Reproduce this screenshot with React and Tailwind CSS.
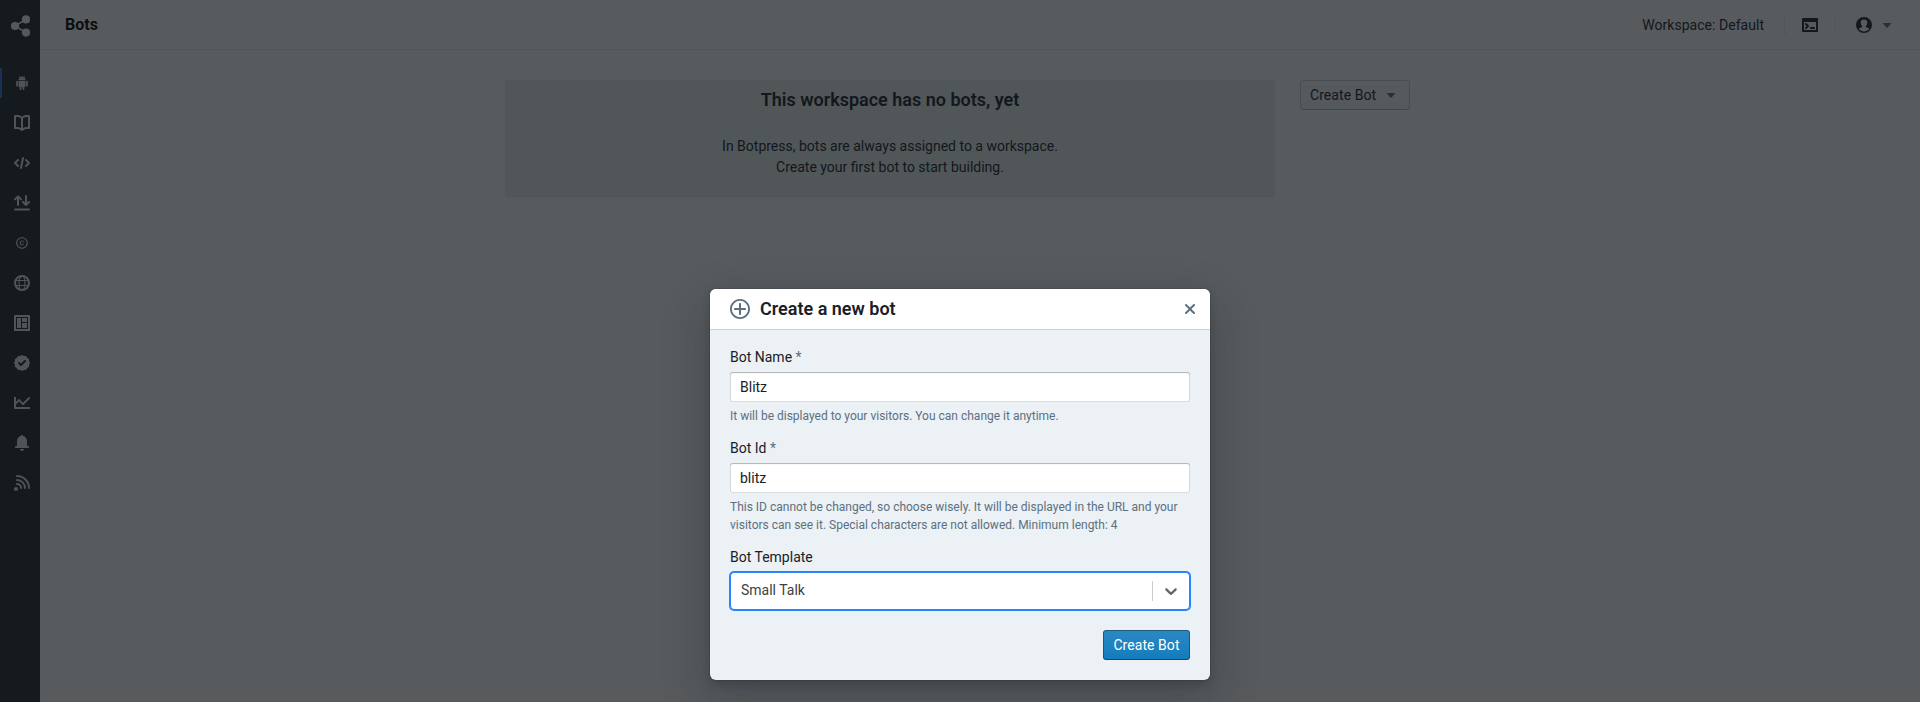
import React from "react";
import { MdCopyright } from "react-icons/md";

function Icon({ size = 16, box = "0 0 16 16", children }) {
  return (
    <svg width={size} height={size} viewBox={box} fill="currentColor" fillRule="evenodd" className="block shrink-0">
      {children}
    </svg>
  );
}

const Share = () => (
  <Icon size={22} box="0 0 22 22">
    <circle cx="5" cy="11" r="4.1" />
    <circle cx="16" cy="4.4" r="4.1" />
    <circle cx="16" cy="17.6" r="4.1" />
    <path d="M16 4.4 5 11l11 6.6" fill="none" stroke="currentColor" strokeWidth="1.6" />
  </Icon>
);

const Android = () => (
  <Icon size={14} box="0 0 24 24">
    <path d="M6 18c0 .55.45 1 1 1h1v3.5c0 .83.67 1.5 1.5 1.5s1.5-.67 1.5-1.5V19h2v3.5c0 .83.67 1.5 1.5 1.5s1.5-.67 1.5-1.5V19h1c.55 0 1-.45 1-1V8H6v10zM3.5 8C2.67 8 2 8.67 2 9.5v7c0 .83.67 1.5 1.5 1.5S5 17.33 5 16.5v-7C5 8.67 4.33 8 3.5 8zm17 0c-.83 0-1.5.67-1.5 1.5v7c0 .83.67 1.5 1.5 1.5s1.5-.67 1.5-1.5v-7c0-.83-.67-1.5-1.5-1.5zm-4.97-5.84l1.3-1.3c.2-.2.2-.51 0-.71-.2-.2-.51-.2-.71 0l-1.48 1.48C13.85 1.23 12.95 1 12 1c-.96 0-1.86.23-2.66.63L7.85.15c-.2-.2-.51-.2-.71 0-.2.2-.2.51 0 .71l1.31 1.31C6.97 3.26 6 5.01 6 7h12c0-1.99-.97-3.75-2.47-4.84zM10 5H9V4h1v1zm5 0h-1V4h1v1z" />
  </Icon>
);

const Manual = () => (
  <Icon>
    <path d="M15.99 1.13c-.02-.41-.33-.77-.78-.87C12.26-.33 9.84.13 8 1.63 6.16.13 3.74-.33.78.26.33.35.03.71.01 1.13H0v12c0 .08 0 .17.02.26.12.51.65.83 1.19.71 2.63-.57 4.59-.04 6.01 1.57.02.03.06.04.08.06.02.02.03.04.05.06.04.03.09.04.13.07.05.03.09.05.14.08.1.04.21.07.32.07h.11c.11 0 .22-.03.32-.07.05-.02.09-.05.14-.08.04-.02.09-.04.13-.07.02-.02.03-.04.05-.06.03-.02.06-.03.08-.06 1.42-1.6 3.39-2.13 6.01-1.57.54.12 1.07-.2 1.19-.71.02-.08.02-.17.02-.26v-12zM7 12.99c-1.4-.83-3.07-1.14-5-.93V1.96c2.11-.28 3.75.2 5 1.46v9.57zm7-.93c-1.93-.21-3.6.1-5 .93V3.42c1.25-1.26 2.89-1.74 5-1.46v10.1z" />
  </Icon>
);

const Code = () => (
  <Icon>
    <path d="M15.71 7.29l-3-3a1.003 1.003 0 00-1.42 1.42L13.59 8l-2.29 2.29c-.19.18-.3.43-.3.71a1.003 1.003 0 001.71.71l3-3c.18-.18.29-.43.29-.71 0-.28-.11-.53-.29-.71zM5 5a1.003 1.003 0 00-1.71-.71l-3 3C.11 7.47 0 7.72 0 8c0 .28.11.53.29.71l3 3a1.003 1.003 0 001.42-1.42L2.41 8 4.7 5.71c.19-.18.3-.43.3-.71zm4-3c-.48 0-.87.35-.96.81l-2 10c-.01.06-.04.12-.04.19 0 .55.45 1 1 1 .48 0 .87-.35.96-.81l2-10c.01-.06.04-.12.04-.19 0-.55-.45-1-1-1z" />
  </Icon>
);

const Sort = () => (
  <Icon>
    <path d="M1 14.5h14M4 10V1.6M1 4.4l3-3 3 3M12 1v8.6M9 7l3 3 3-3" fill="none" stroke="currentColor" strokeWidth="2" strokeLinecap="round" strokeLinejoin="round" />
  </Icon>
);

const Globe = () => (
  <Icon>
    <g fill="none" stroke="currentColor">
      <circle cx="8" cy="8" r="7" strokeWidth="2" />
      <ellipse cx="8" cy="8" rx="3" ry="7" strokeWidth="1.1" />
      <path d="M1.5 5.5h13M1.5 10.5h13" strokeWidth="1" />
    </g>
  </Icon>
);

const Panels = () => (
  <Icon>
    <path d="M.5 0h15a.5.5 0 01.5.5v15a.5.5 0 01-.5.5H.5a.5.5 0 01-.5-.5V.5A.5.5 0 01.5 0zM2 2v12h12V2H2z" />
    <path d="M3 3h4v10H3zM8 3h5v4H8zM8 8h5v5H8z" />
  </Icon>
);

const Endorsed = () => (
  <Icon>
    <path d="M15.86 7.5l-.81-1.42V4.5c0-.36-.19-.68-.49-.87l-1.37-.8-.81-1.41c-.19-.31-.51-.49-.86-.49H9.89L8.5.14a.945.945 0 00-1 0l-1.39.79H4.52c-.36 0-.68.19-.87.49l-.8 1.37-1.44.84c-.3.19-.49.51-.49.87v1.65l-.78 1.34a.945.945 0 000 1l.78 1.34v1.65c0 .36.19.68.49.87l1.42.81.8 1.37c.19.31.51.49.87.49H6.1l1.4.8a.945.945 0 001 0l1.4-.8h1.6c.36 0 .68-.19.87-.49l.81-1.41 1.37-.8c.3-.19.49-.51.49-.87v-1.59l.82-1.42a.945.945 0 000-.94zm-4.12-.81l-4 4c-.18.19-.43.31-.74.31s-.56-.12-.74-.29l-2-2A1.003 1.003 0 015.68 7.3L7 8.6l3.29-3.31a1.003 1.003 0 011.45 1.4z" />
  </Icon>
);

const Chart = () => (
  <Icon>
    <path d="M1 3v10h14" fill="none" stroke="currentColor" strokeWidth="2" strokeLinecap="square" strokeLinejoin="round" />
    <path d="M1.5 8.6L5 5.2l4 4L15.2 3" fill="none" stroke="currentColor" strokeWidth="1.9" strokeLinecap="round" />
  </Icon>
);

const Bell = () => (
  <Icon>
    <path d="M8 16c1.1 0 2-.9 2-2H6c0 1.1.9 2 2 2zm6-5c-.55 0-1-.45-1-1V6c0-2.43-1.73-4.45-4.02-4.9 0-.04.02-.06.02-.1 0-.55-.45-1-1-1S7 .45 7 1c0 .04.02.06.02.1A4.992 4.992 0 003 6v4c0 .55-.45 1-1 1s-1 .45-1 1 .45 1 1 1h12c.55 0 1-.45 1-1s-.45-1-1-1z" />
  </Icon>
);

const Feed = () => (
  <Icon>
    <circle cx="2" cy="14" r="2" />
    <path d="M3 9a4 4 0 014 4M3 5a8 8 0 018 8M3 1a12 12 0 0112 12" fill="none" stroke="currentColor" strokeWidth="1.9" strokeLinecap="round" />
  </Icon>
);

const Console = () => (
  <Icon>
    <path d="M15 15H1c-.55 0-1-.45-1-1V2c0-.55.45-1 1-1h14c.55 0 1 .45 1 1v12c0 .55-.45 1-1 1zM14 5H2v8h12V5zM4 6c.28 0 .53.11.71.29l2 2c.18.18.29.43.29.71s-.11.53-.29.71l-2 2a1.003 1.003 0 01-1.42-1.42L4.590 9l-1.300-1.290A1.003 1.003 0 014 6zm5 4h3c.55 0 1 .45 1 1s-.45 1-1 1H9c-.55 0-1-.45-1-1s.45-1 1-1z" />
  </Icon>
);

const User = () => (
  <Icon>
    <path d="M8 0a8 8 0 100 16A8 8 0 008 0zm0 2.4c2.3 0 3.5 1.5 3.3 3.3-.1 1.2-.6 2.400-1.300 3.200-.2.3-.3 1.050.1 1.300.8.4 2.400.8 3.300 1.500C12.200 13.400 10.200 14.500 8 14.500s-4.200-1.100-5.400-2.800c.9-.7 2.500-1.100 3.300-1.500.4-.25.3-1 .1-1.300-.7-.8-1.200-2-1.300-3.200C4.500 3.900 5.700 2.400 8 2.400z" />
  </Icon>
);

const Caret = () => (
  <Icon>
    <path d="M12 6.500c0-.28-.22-.5-.5-.5h-7a.495.495 0 00-.37.830l3.500 4c.09.1.22.170.37.170s.28-.07.370-.170l3.500-4c.08-.09.13-.2.13-.330z" />
  </Icon>
);

const AddCircle = () => (
  <Icon size={20} box="0 0 20 20">
    <path d="M10 0C4.480 0 0 4.480 0 10s4.480 10 10 10 10-4.480 10-10S15.520 0 10 0zm0 18.200a8.200 8.200 0 110-16.400 8.200 8.200 0 010 16.400zM15 9h-4V5c0-.55-.45-1-1-1s-1 .45-1 1v4H5c-.55 0-1 .45-1 1s.45 1 1 1h4v4c0 .55.45 1 1 1s1-.45 1-1v-4h4c.55 0 1-.45 1-1s-.45-1-1-1z" />
  </Icon>
);

const Cross = () => (
  <Icon>
    <path d="M9.410 8l3.290-3.290c.19-.18.3-.43.3-.71a1.003 1.003 0 00-1.710-.71L8 6.590l-3.290-3.300a1.003 1.003 0 00-1.420 1.420L6.590 8 3.300 11.290c-.19.18-.3.43-.3.710a1.003 1.003 0 001.710.710L8 9.410l3.290 3.290c.18.19.43.3.710.3a1.003 1.003 0 00.710-1.710L9.410 8z" />
  </Icon>
);

const Chevron = () => (
  <Icon size={20} box="0 0 20 20">
    <path d="M4.516 7.548c0.436-0.446 1.043-0.481 1.576 0l3.908 3.747 3.908-3.747c0.533-0.481 1.141-0.446 1.574 0 0.436 0.445 0.408 1.197 0 1.615-0.406 0.418-4.695 4.502-4.695 4.502-0.217 0.223-0.502 0.335-0.787 0.335s-0.570-0.112-0.789-0.335c0 0-4.287-4.084-4.695-4.502s-0.436-1.170 0-1.615z" />
  </Icon>
);

const Copyright = () => <MdCopyright size={14} />;

const navItems = [Android, Manual, Code, Sort, Copyright, Globe, Panels, Endorsed, Chart, Bell, Feed];

function Sidebar() {
  return (
    <nav className="flex w-10 shrink-0 flex-col bg-[#212529]">
      <div className="flex h-[63px] items-start pt-[15px] pl-2.5 text-[#f5f8fa]">
        <Share />
      </div>
      {navItems.map((Glyph, i) => (
        <div key={i} className="flex h-10 items-center">
          <div className={i === 0 ? "h-[30px] w-0.5 bg-[#3273dc]" : "h-[30px] w-0.5"} />
          <div className="flex flex-1 justify-center pl-0.5 text-[#e6e6e6]">
            <Glyph />
          </div>
        </div>
      ))}
    </nav>
  );
}

function TopBar() {
  return (
    <header className="flex h-[50px] items-center border-b border-[#ebebeb] px-[25px]">
      <h1 className="flex-1 text-base font-bold text-black">Bots</h1>
      <span className="text-sm tracking-[0.03px] text-[#182026]">Workspace: Default</span>
      <div className="ml-5 h-5 w-px bg-[#e8eaeb]" />
      <div className="ml-[17px] text-[#182026]"><Console /></div>
      <div className="ml-[17px] h-5 w-px bg-[#e8eaeb]" />
      <div className="ml-5 text-[#182026]"><User /></div>
      <div className="ml-[7px] text-[#5c7080]"><Caret /></div>
    </header>
  );
}

function Label({ children }) {
  return <div className="mb-1.5 text-sm leading-[17px] text-[#182026]">{children}</div>;
}

function Field({ label, children, helper }) {
  return (
    <div className="mb-[15px]">
      <Label>
        {label} <span className="text-[#5c7080]">*</span>
      </Label>
      {children}
      <div className="mt-[5px] text-xs leading-[18px] text-[#5c7080]">{helper}</div>
    </div>
  );
}

function TextInput({ value }) {
  return (
    <div className="flex h-[30px] items-center rounded-[3px] bg-white px-2.5 text-sm text-[#182026] shadow-[inset_0_0_0_1px_rgba(16,22,26,0.15),inset_0_1px_1px_rgba(16,22,26,0.2)]">
      {value}
    </div>
  );
}

function CreateBotDialog() {
  return (
    <section className="w-[500px] overflow-hidden rounded-md bg-[#ebf1f5] shadow-[0_0_0_1px_rgba(16,22,26,0.1),0_4px_8px_rgba(16,22,26,0.2),0_18px_46px_6px_rgba(16,22,26,0.2)]">
      <div className="relative flex h-10 items-center bg-white pl-5 pr-3 text-[#5c7080] shadow-[0_1px_0_rgba(16,22,26,0.15)]">
        <AddCircle />
        <h2 className="ml-2.5 flex-1 text-lg font-semibold text-[#182026]">Create a new bot</h2>
        <Cross />
      </div>
      <div className="p-5">
        <Field label="Bot Name" helper="It will be displayed to your visitors. You can change it anytime.">
          <TextInput value="Blitz" />
        </Field>
        <Field
          label="Bot Id"
          helper="This ID cannot be changed, so choose wisely. It will be displayed in the URL and your visitors can see it. Special characters are not allowed. Minimum length: 4"
        >
          <TextInput value="blitz" />
        </Field>
        <Label>Bot Template</Label>
        <div className="flex h-[38px] items-center rounded-[4px] border border-[#2684ff] bg-white text-sm text-[#404040] shadow-[0_0_0_1px_#2684ff]">
          <span className="flex-1 pb-0.5 pl-2.5">Small Talk</span>
          <span className="h-5 w-px bg-[#cccccc]" />
          <span className="px-2 text-[#666666]"><Chevron /></span>
        </div>
        <div className="mt-5 flex justify-end">
          <button className="h-[30px] w-[87px] rounded-[3px] bg-[#137cbd] bg-linear-to-b from-white/10 to-white/0 text-sm tracking-[0.06px] text-white shadow-[inset_0_0_0_1px_rgba(16,22,26,0.4),inset_0_-1px_0_rgba(16,22,26,0.2)]">
            Create Bot
          </button>
        </div>
      </div>
    </section>
  );
}

export default function App() {
  return (
    <div className="relative h-[702px] w-full overflow-hidden font-['Roboto',sans-serif]">
      <div className="flex h-full bg-white">
        <Sidebar />
        <div className="flex-1">
          <TopBar />
          <main className="flex items-start pt-[30px] pl-[465px]">
            <section className="h-[117px] w-[770px] rounded-[3px] bg-[#e9efed] pt-[9px] text-center text-[#182026]">
              <h2 className="text-lg leading-[21px] font-semibold">This workspace has no bots, yet</h2>
              <p className="mt-[26px] text-sm leading-[21px]">
                In Botpress, bots are always assigned to a workspace.
                <br />
                Create your first bot to start building.
              </p>
            </section>
            <button className="ml-[25px] flex h-[30px] w-[110px] items-center rounded-[3px] bg-[#f5f8fa] bg-linear-to-b from-white/80 to-white/0 pl-2.5 text-sm tracking-[0.06px] text-[#182026] shadow-[inset_0_0_0_1px_rgba(16,22,26,0.2),inset_0_-1px_0_rgba(16,22,26,0.1)]">
              Create Bot
              <span className="ml-[7px] text-[#5c7080]"><Caret /></span>
            </button>
          </main>
        </div>
      </div>
      <div className="absolute inset-0 flex justify-center bg-[rgba(16,22,26,0.7)] pt-[289px]">
        <div>
          <CreateBotDialog />
        </div>
      </div>
    </div>
  );
}
